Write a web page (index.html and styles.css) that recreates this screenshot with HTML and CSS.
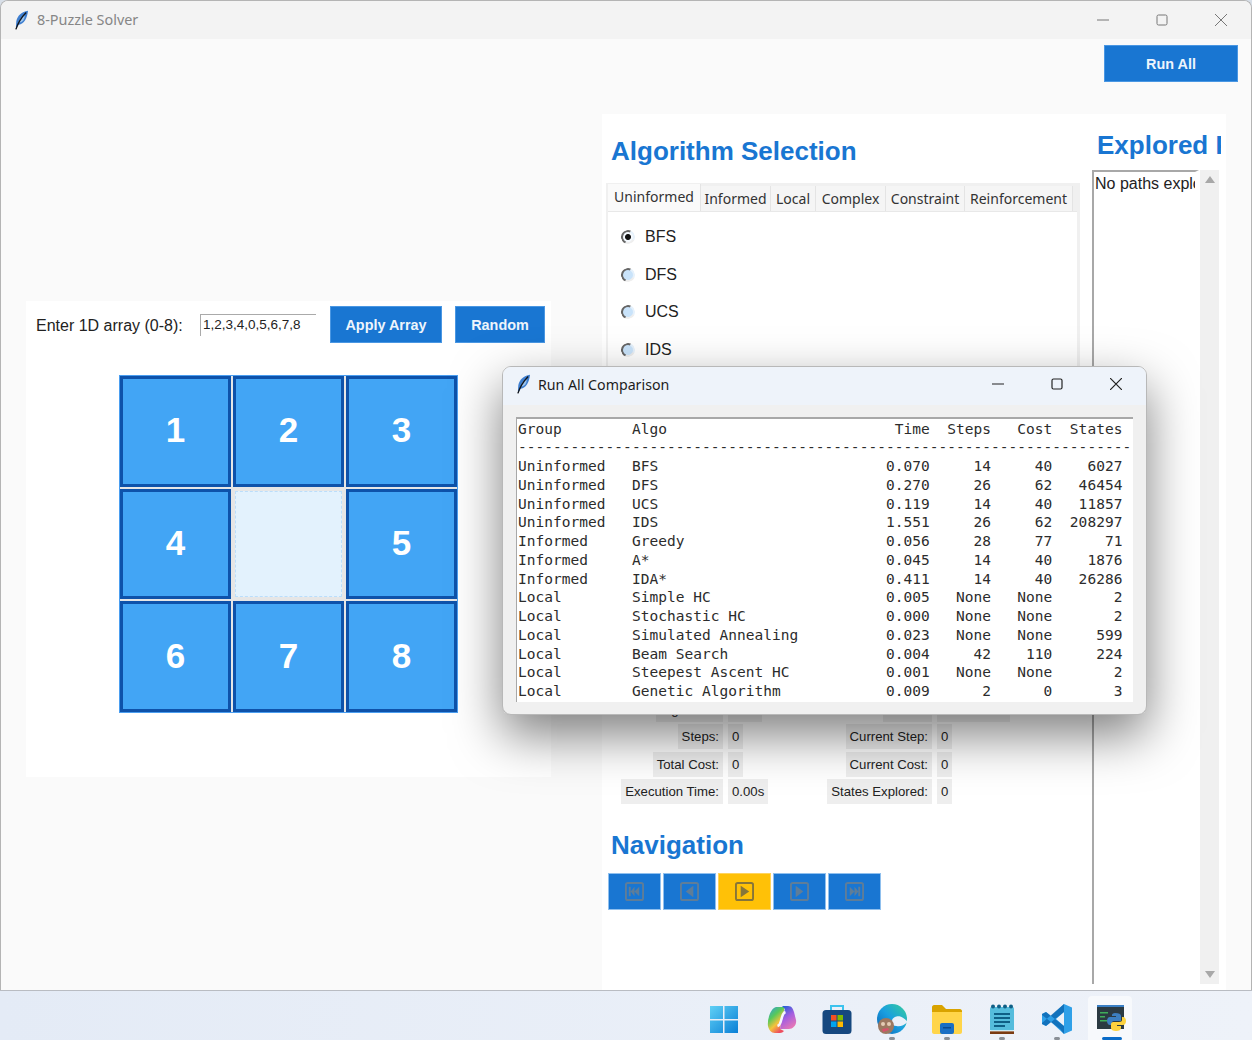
FILE: index.html
```html
<!DOCTYPE html>
<html>
<head>
<title>8-Puzzle Solver</title>
<meta charset="utf-8">
<link rel="stylesheet" href="styles.css">
</head>
<body>
<div class="window">
  <div class="titlebar">
    <svg class="feather" viewBox="0 0 16 20"><path d="M15 0C8 1 4 5 2.500 11L2 17l1 1 2-3c6-1 9-7 10-15z" fill="#3f7fd0"/><path d="M11 4C8 6 6 9 5 13l3-1c3-2 4-5 3-8z" fill="#9cc4ee"/><path d="M13 2C9 6 5 11 2 20" stroke="#10151c" stroke-width="1.500" fill="none"/></svg>
    <span class="title">8-Puzzle Solver</span>
    <div class="controls">
      <svg viewBox="0 0 12 12"><path d="M0 6h12"/></svg>
      <svg viewBox="0 0 12 12"><rect x="1" y="1" width="10" height="10" rx="1.500"/></svg>
      <svg viewBox="0 0 12 12"><path d="M0 0l12 12M12 0L0 12"/></svg>
    </div>
  </div>
  <div class="client">
    <div class="toolbar"><button class="btn btn-run">Run All</button></div>
    <div class="panels">
      <div class="puzzle-panel">
        <div class="array-row">
          <span class="array-label">Enter 1D array (0-8):</span>
          <input class="array-input" value="1,2,3,4,0,5,6,7,8">
          <button class="btn btn-apply">Apply Array</button>
          <button class="btn btn-random">Random</button>
        </div>
        <div class="board">
          <div class="tile">1</div><div class="tile">2</div><div class="tile">3</div>
          <div class="tile">4</div><div class="tile empty"></div><div class="tile">5</div>
          <div class="tile">6</div><div class="tile">7</div><div class="tile">8</div>
        </div>
      </div>
      <div class="side-panel">
        <div class="algo-col">
          <h2 class="heading">Algorithm Selection</h2>
          <div class="notebook">
            <div class="tabs">
              <div class="tab active">Uninformed</div>
              <div class="tab">Informed</div>
              <div class="tab">Local</div>
              <div class="tab">Complex</div>
              <div class="tab">Constraint</div>
              <div class="tab">Reinforcement</div>
            </div>
            <div class="tab-body">
              <div class="radio-row"><span class="radio checked"></span>BFS</div>
              <div class="radio-row"><span class="radio"></span>DFS</div>
              <div class="radio-row"><span class="radio"></span>UCS</div>
              <div class="radio-row"><span class="radio"></span>IDS</div>
            </div>
          </div>
          <div class="stats">
            <span class="stat-label">Algorithm:</span><span class="stat-value">BFS</span>
            <span class="stat-label">Status:</span><span class="stat-value">Not started</span>
            <span class="stat-label">Steps:</span><span class="stat-value">0</span>
            <span class="stat-label">Current Step:</span><span class="stat-value">0</span>
            <span class="stat-label">Total Cost:</span><span class="stat-value">0</span>
            <span class="stat-label">Current Cost:</span><span class="stat-value">0</span>
            <span class="stat-label">Execution Time:</span><span class="stat-value">0.00s</span>
            <span class="stat-label">States Explored:</span><span class="stat-value">0</span>
          </div>
          <h2 class="heading nav-heading">Navigation</h2>
          <div class="nav-buttons">
            <button class="nav-btn"><svg viewBox="0 0 20 20"><rect x="1" y="1" width="18" height="18" rx="2"/><path class="fill" d="M4 5h2v10H4zM10 5v10l-4-5zM15 5v10l-5-5z"/></svg></button>
            <button class="nav-btn"><svg viewBox="0 0 20 20"><rect x="1" y="1" width="18" height="18" rx="2"/><path class="fill" d="M14 4v12l-8-6z"/></svg></button>
            <button class="nav-btn play"><svg viewBox="0 0 20 20"><rect x="1" y="1" width="18" height="18" rx="2"/><path class="fill" d="M6 4v12l9-6z"/></svg></button>
            <button class="nav-btn"><svg viewBox="0 0 20 20"><rect x="1" y="1" width="18" height="18" rx="2"/><path class="fill" d="M6 4v12l8-6z"/></svg></button>
            <button class="nav-btn"><svg viewBox="0 0 20 20"><rect x="1" y="1" width="18" height="18" rx="2"/><path class="fill" d="M5 5v10l5-5zM10 5v10l4-5zM14 5h2v10h-2z"/></svg></button>
          </div>
        </div>
        <div class="paths-col">
          <h2 class="heading paths-heading">Explored Paths</h2>
          <div class="paths-box">
            <div class="paths-text">No paths explored yet</div>
            <div class="scrollbar"><span class="arrow up"></span><span class="arrow down"></span></div>
          </div>
        </div>
      </div>
    </div>
  </div>
</div>

<div class="dialog">
  <div class="dialog-title">
    <svg class="feather" viewBox="0 0 16 20"><path d="M15 0C8 1 4 5 2.500 11L2 17l1 1 2-3c6-1 9-7 10-15z" fill="#3f7fd0"/><path d="M11 4C8 6 6 9 5 13l3-1c3-2 4-5 3-8z" fill="#9cc4ee"/><path d="M13 2C9 6 5 11 2 20" stroke="#10151c" stroke-width="1.500" fill="none"/></svg>
    <span>Run All Comparison</span>
    <div class="controls dark">
      <svg viewBox="0 0 12 12"><path d="M0 6h12"/></svg>
      <svg viewBox="0 0 12 12"><rect x="1" y="1" width="10" height="10" rx="1.500"/></svg>
      <svg viewBox="0 0 12 12"><path d="M0 0l12 12M12 0L0 12"/></svg>
    </div>
  </div>
  <div class="dialog-body">
<pre class="results">Group        Algo                          Time  Steps   Cost  States
----------------------------------------------------------------------
Uninformed   BFS                          0.070     14     40    6027
Uninformed   DFS                          0.270     26     62   46454
Uninformed   UCS                          0.119     14     40   11857
Uninformed   IDS                          1.551     26     62  208297
Informed     Greedy                       0.056     28     77      71
Informed     A*                           0.045     14     40    1876
Informed     IDA*                         0.411     14     40   26286
Local        Simple HC                    0.005   None   None       2
Local        Stochastic HC                0.000   None   None       2
Local        Simulated Annealing          0.023   None   None     599
Local        Beam Search                  0.004     42    110     224
Local        Steepest Ascent HC           0.001   None   None       2
Local        Genetic Algorithm            0.009      2      0       3</pre>
  </div>
</div>

<div class="taskbar">
  <div class="task start">
    <svg viewBox="0 0 30 30"><defs><linearGradient id="win" x1="0" y1="0" x2="1" y2="1"><stop offset="0" stop-color="#5fd0f5"/><stop offset="1" stop-color="#0a7fd6"/></linearGradient></defs><path fill="url(#win)" d="M1 2h13v13H1zM15.500 2H29v13H15.500zM1 16.500h13V29H1zM15.500 16.500H29V29H15.500z"/></svg>
  </div>
  <div class="task">
    <svg viewBox="0 0 30 30"><defs><linearGradient id="cop1" x1="0" y1="0" x2=".6" y2="1"><stop offset="0" stop-color="#2f9ae8"/><stop offset=".4" stop-color="#57c95a"/><stop offset=".7" stop-color="#f5c33a"/><stop offset="1" stop-color="#ee4d5f"/></linearGradient><linearGradient id="cop2" x1=".3" y1="0" x2=".8" y2="1"><stop offset="0" stop-color="#2a5fd8"/><stop offset=".45" stop-color="#a45ee0"/><stop offset="1" stop-color="#f07ab0"/></linearGradient></defs><path fill="url(#cop1)" d="M9 3h9c-1 3-3 12-5 22l4 2c-2 2-3 2-6 2H8c-4 0-6-3-7-7C0 15 4 4 9 3z"/><path fill="url(#cop2)" d="M15 2h6c4 0 5 3 6 6l2 8c1 5-3 9-7 9h-9c1-6 3-14 5-20z"/><path d="M18.500 8c-3 1-3 4-4 7s-1 6-4 7" fill="none" stroke="#f6f6fb" stroke-width="2.500"/></svg>
  </div>
  <div class="task">
    <svg viewBox="0 0 30 30"><path d="M9 7V2h12v5" fill="none" stroke="#3cc3ee" stroke-width="2"/><rect x="0.500" y="6" width="29" height="24" rx="3.500" fill="#16487f"/><path fill="#f25022" d="M9 11h5.500v5.500H9z"/><path fill="#7fba00" d="M15.500 11H21v5.500h-5.500z"/><path fill="#00a4ef" d="M9 17.500h5.500V23H9z"/><path fill="#ffb900" d="M15.500 17.500H21V23h-5.500z"/></svg>
  </div>
  <div class="task running">
    <svg viewBox="0 0 30 30"><defs><linearGradient id="edge" x1="0" y1="1" x2="1" y2="0"><stop offset="0" stop-color="#0b5fb0"/><stop offset=".5" stop-color="#1a9fe0"/><stop offset="1" stop-color="#36cf9a"/></linearGradient></defs><circle cx="15" cy="15" r="15" fill="url(#edge)"/><path fill="#eaf0f9" d="M30.500 18c-3-4-7-6.500-11-5.500-3 .7-5 3-5 5.500 0 2 2 4 5 4 4 1 8-1 11-4z"/><circle cx="9" cy="22" r="8" fill="#9c7860"/><circle cx="6" cy="20" r="2" fill="#e4ccb4"/><circle cx="12" cy="20" r="2" fill="#e4ccb4"/><path fill="#d8506a" d="M5 25l6-1 1 2-6 2z"/></svg>
  </div>
  <div class="task running">
    <svg viewBox="0 0 30 30"><path fill="#d9a300" d="M0 3c0-1 1-2 2-2h8l4 4h14c1 0 2 1 2 2v6H0z"/><path fill="#ffd54a" d="M0 8h30v20c0 1-1 2-2 2H2c-1 0-2-1-2-2z"/><rect x="8" y="19" width="14" height="11" rx="2" fill="#1a6fc4"/><path fill="#0b4a8f" d="M11 23h8v1.500h-8z"/></svg>
  </div>
  <div class="task running">
    <svg viewBox="0 0 24 30"><rect x="0" y="3" width="24" height="24" rx="1.500" fill="#55bcdc"/><path fill="#7a3b12" d="M0 27h24v3H0z"/><path fill="#fff" d="M0 26h24v1.500H0z" opacity=".7"/><g fill="#0f5f86"><circle cx="3" cy="2.500" r="2"/><circle cx="9" cy="2.500" r="2"/><circle cx="15" cy="2.500" r="2"/><circle cx="21" cy="2.500" r="2"/><path d="M4 9h16v2H4zM4 13h16v2H4zM4 17h16v2H4zM4 21h11v2H4z"/></g></svg>
  </div>
  <div class="task running">
    <svg viewBox="0 0 30 30"><path fill="#2fa0e8" fill-rule="evenodd" d="M22 0l8 3.500v23L22 30 9 18l-5 4-4-2v-10l4-2 5 4zM22 8l-8 7 8 7z"/><path fill="#0a63ad" d="M22 0v8L4 22l-4-2v-1zM0 10v1l18 14 4 5v-8L4 8z" opacity=".75"/></svg>
  </div>
  <div class="task active">
    <svg viewBox="0 0 30 30"><rect y="1" width="27" height="24" fill="#2b3a42"/><path fill="#3a7fc4" d="M0 1h27v2H0z"/><path fill="#3fae5a" d="M3 8h8v1.500H3zM3 12h5v1.500H3zM3 16h7v1.500H3z"/><path fill="#3d7fc0" d="M18 9c4 0 6 1 6 3v5h-7c-2 0-2 1-2 2v2h-2c-2 0-3-2-3-4s1-4 3-4h6v-1h-4v-1c0-1 1-2 3-2z"/><path fill="#fdd23e" d="M26 13c2 0 3 2 3 4s-1 4-3 4h-6v1h4v2c0 2-2 3-5 3s-5-1-5-3v-4c0-1 1-2 2-2h6c2 0 3-1 3-2v-3z"/></svg>
  </div>
</div>
</body>
</html>
```

FILE: styles.css
```css
* {
  box-sizing: border-box;
}

html, body {
  margin: 0;
  height: 1040px;
  overflow: hidden;
}

body {
  position: relative;
  background: #d8dfe8;
  font-family: "Liberation Sans", Arial, sans-serif;
  color: #222;
}

.window {
  height: 990px;
  border: 1px solid #b4b4b4;
  border-bottom: 0;
  border-radius: 8px 8px 0 0;
  overflow: hidden;
  background: #fafafa;
}

.titlebar {
  display: flex;
  align-items: center;
  height: 38px;
  padding: 0 0 1px 13px;
  background: #f3f3f3;
}

.feather {
  width: 15px;
  height: 20px;
  flex: none;
}

.title {
  margin-left: 8px;
  font: 14.4px "Noto Sans", sans-serif;
  color: #868686;
}

.controls {
  display: flex;
  gap: 47px;
  margin-left: auto;
  margin-right: 24px;
}

.controls svg {
  width: 12px;
  height: 12px;
  fill: none;
  stroke: #777;
  stroke-width: 1;
}

.controls.dark svg {
  stroke: #222;
  stroke-width: 1.2;
}

.toolbar {
  display: flex;
  justify-content: flex-end;
  padding: 6px 13px 0 0;
}

.btn {
  height: 37px;
  padding: 0;
  border: 1px solid #4a97e3;
  background: #1976d2;
  color: #eef5fc;
  font: bold 14.4px "Liberation Sans", sans-serif;
}

.btn-run {
  width: 134px;
}

.btn-apply {
  width: 112px;
  margin-left: 14px;
}

.btn-random {
  width: 90px;
  margin-left: 13px;
}

.panels {
  display: flex;
  align-items: flex-start;
  gap: 51px;
  margin-top: 32px;
  padding-left: 25px;
}

.puzzle-panel {
  width: 525px;
  height: 476px;
  margin-top: 187px;
  padding: 5px 0 0 10px;
  background: #fff;
}

.array-row {
  display: flex;
  align-items: center;
}

.array-label {
  width: 164px;
  padding-top: 2px;
  font-size: 16px;
}

.array-input {
  width: 116px;
  height: 22px;
  padding: 0 0 2px 2px;
  border: 0;
  border-top: 1px solid #aaa;
  border-left: 1px solid #aaa;
  font: 13.5px "Liberation Sans", sans-serif;
  color: #222;
  outline: none;
}

.board {
  display: grid;
  grid-template-columns: repeat(3, 111px);
  grid-template-rows: repeat(3, 110.67px);
  gap: 2px;
  width: 337px;
  margin: 33px 0 0 84px;
  background: #e6e6e6;
  box-shadow: 0 0 0 1px #4b9ef0;
}

.tile {
  display: flex;
  align-items: center;
  justify-content: center;
  padding-bottom: 2px;
  border: 3px solid #0e52aa;
  background: #42a5f5;
  color: #fff;
  font-size: 35px;
  font-weight: bold;
}

.tile.empty {
  margin: 2px;
  border: 1px dashed #bbdefb;
  background: #e3f2fd;
}

.side-panel {
  display: flex;
  width: 624px;
  height: 876px;
  background: #fff;
}

.algo-col {
  width: 490px;
  padding-left: 4px;
}

.heading {
  margin: 0;
  padding-left: 5px;
  color: #1976d2;
  font-size: 26px;
  font-weight: bold;
  line-height: 32px;
  white-space: nowrap;
}

.algo-col > .heading:first-child {
  margin-top: 21px;
}

/* ttk notebook: grey frame with white page inside */
.notebook {
  width: 474px;
  height: 457px;
  margin-top: 16px;
  padding: 1px 3px 0 2px;
  background: #f0f0f0;
}

.tabs {
  display: grid;
  grid-template-columns: 93px 70px 45px 70px 79px 108px;
  height: 27px;
  font: 14px "Noto Sans", sans-serif;
  color: #333;
}

.tab {
  margin-top: 2px;
  padding-top: 3px;
  text-align: center;
  background: #f5f5f5;
  border-right: 1px solid #e4e4e4;
  white-space: nowrap;
}

.tab.active {
  margin-top: 0;
  padding-top: 3px;
  background: #fafafa;
}

.tab-body {
  height: 429px;
  padding-top: 6px;
  border-top: 1px solid #e8e8e8;
  background: #fff;
}

.radio-row {
  display: flex;
  align-items: center;
  gap: 10px;
  height: 37.7px;
  padding-left: 13px;
  font-size: 16px;
}

.radio {
  width: 14px;
  height: 14px;
  border: 2px solid;
  border-color: #666 #e6f1fb #eee #666;
  border-radius: 50%;
  background: #c9e3fa;
  transform: rotate(-20deg);
}

.radio.checked {
  background: radial-gradient(circle, #111 0, #111 2.500px, #f4f9fe 3.500px);
}

.stats {
  display: grid;
  grid-template-columns: 101px 93px 106px 75px;
  grid-auto-rows: 25px;
  gap: 2.5px 5px;
  margin: 56.5px 0 0 16px;
  font-size: 13.2px;
}

.stat-label,
.stat-value {
  padding: 0 4px;
  background: #eee;
  line-height: 25px;
  white-space: nowrap;
}

.stat-label {
  justify-self: end;
}

.stat-value {
  justify-self: start;
}

.nav-heading {
  margin-top: 25px;
}

.nav-buttons {
  display: flex;
  gap: 2px;
  margin: 12px 0 0 2px;
}

.nav-btn {
  display: flex;
  align-items: center;
  justify-content: center;
  width: 53px;
  height: 37px;
  padding: 0;
  border: 1px solid #90c0ee;
  background: #1976d2;
  color: #5f7d98;
}

.nav-btn svg {
  width: 19px;
  height: 19px;
  fill: none;
  stroke: currentColor;
  stroke-width: 2;
}

.nav-btn .fill {
  fill: currentColor;
  stroke: none;
}

.nav-btn.play {
  border-color: #ffd45e;
  background: #ffc107;
  color: #86753a;
}

.paths-col {
  width: 129px;
  overflow: hidden;
}

.paths-heading {
  margin-top: 15px;
  padding-left: 5px;
}

.paths-box {
  display: flex;
  height: 814px;
  margin-top: 9px;
}

.paths-text {
  width: 107px;
  padding: 3px 0 0 1px;
  border-top: 2px solid #a8a8a8;
  border-left: 2px solid #a8a8a8;
  border-right: 4px solid #fff;
  font-size: 16px;
  white-space: nowrap;
  overflow: hidden;
}

.scrollbar {
  display: flex;
  flex-direction: column;
  justify-content: space-between;
  align-items: center;
  width: 19px;
  margin-left: 1px;
  padding: 6px 0;
  background: #f0f0f0;
}

.arrow {
  width: 0;
  height: 0;
  border-left: 5px solid transparent;
  border-right: 5px solid transparent;
}

.arrow.up {
  border-bottom: 7px solid #a8a8a8;
}

.arrow.down {
  border-top: 7px solid #a8a8a8;
}

/* second toplevel, sits over the main window */
.dialog {
  position: absolute;
  left: 502px;
  top: 366px;
  width: 645px;
  height: 349px;
  border: 1px solid #b8b8b8;
  border-radius: 9px;
  overflow: hidden;
  background: #f0f0f0;
}

.dialog-title {
  display: flex;
  align-items: center;
  height: 38px;
  padding: 0 0 4px 13px;
  background: #eef3fa;
  font: 14.2px "Noto Sans", sans-serif;
  color: #1c1c1c;
}

.dialog-title span {
  margin-left: 7px;
}

.dialog-body {
  height: 285px;
  margin: 12px 13px 0;
  padding: .6px 0 0 1px;
  border-top: 2px solid #a8a8a8;
  border-left: 1px solid #a8a8a8;
  background: #fff;
}

.results {
  margin: 0;
  font: 14.5px/18.75px "DejaVu Sans Mono", monospace;
  letter-spacing: .03px;
  color: #2c2c2c;
}

body::after {
  content: "";
  position: absolute;
  left: 502px;
  top: 366px;
  width: 645px;
  height: 349px;
  border-radius: 9px;
  box-shadow: 0 20px 50px rgba(0, 0, 0, .5);
  pointer-events: none;
}

.taskbar {
  display: flex;
  align-items: center;
  gap: 11px;
  height: 50px;
  padding-left: 702px;
  border-top: 1px solid #b9bcc2;
  background: linear-gradient(90deg, #e4ebf6, #eef2f9);
  overflow: hidden;
}

.task {
  position: relative;
  display: flex;
  align-items: center;
  justify-content: center;
  width: 44px;
  height: 45px;
  margin-top: 6px;
}

.task.start {
  margin-right: 2.5px;
}

.task svg {
  width: 30px;
  height: 30px;
}

.task.running::after,
.task.active::after {
  content: "";
  position: absolute;
  bottom: 1px;
  left: 50%;
  width: 6px;
  height: 3px;
  margin-left: -3px;
  border-radius: 2px;
  background: #8a8f96;
}

.task.active {
  margin-left: -2px;
  padding-left: 4px;
  border-radius: 4px 4px 0 0;
  background: #f7f9fc;
}

.task.active::after {
  width: 20px;
  margin-left: -8px;
  background: #0a6cc8;
}
```
